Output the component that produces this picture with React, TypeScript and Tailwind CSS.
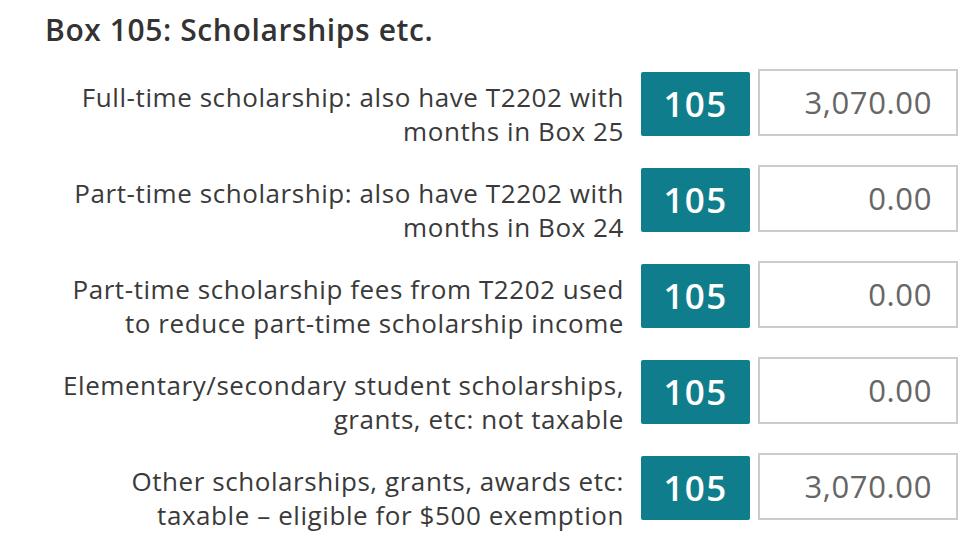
import React from "react";

const rows = [
  { label: ["Full-time scholarship: also have T2202 with", "months in Box 25"], value: "3,070.00" },
  { label: ["Part-time scholarship: also have T2202 with", "months in Box 24"], value: "0.00" },
  { label: ["Part-time scholarship fees from T2202 used", "to reduce part-time scholarship income"], value: "0.00" },
  { label: ["Elementary/secondary student scholarships,", "grants, etc: not taxable"], value: "0.00" },
  { label: ["Other scholarships, grants, awards etc:", "taxable \u2013 eligible for $500 exemption"], value: "3,070.00" },
];

export default function App() {
  return (
    <div
      className="w-[978px] h-[554px] bg-white overflow-hidden pl-[45px] pr-[20px] pt-[13px]"
      style={{ fontFamily: "'Open Sans', 'Noto Sans', sans-serif" }}
    >
      <h1 className="text-[30px] leading-[34px] font-semibold text-[#333] tracking-[0.02em]">Box 105: Scholarships etc.</h1>
      <div className="mt-[22px] flex flex-col">
        {rows.map((r, i) => (
          <div key={i} className="flex items-start h-[96px]">
            <div className="flex-1 text-right pt-[11px] pr-[17px] text-[26px] leading-[34px] text-[#3a3a3a] tracking-[0.022em]">
              <div className="whitespace-nowrap">{r.label[0]}</div>
              <div className="whitespace-nowrap">{r.label[1]}</div>
            </div>
            <div className="mt-[3px] w-[109px] h-[64px] rounded-[2px] bg-[#0f7d8c] text-white flex items-center justify-center text-[35px] font-semibold tracking-[0.04em]">
              105
            </div>
            <div className="ml-[8px] w-[200px] h-[67px] border-2 border-[#cccccc] flex items-center justify-end pr-[24px] text-[31px] text-[#666] tracking-[0.02em]">
              {r.value}
            </div>
          </div>
        ))}
      </div>
    </div>
  );
}
